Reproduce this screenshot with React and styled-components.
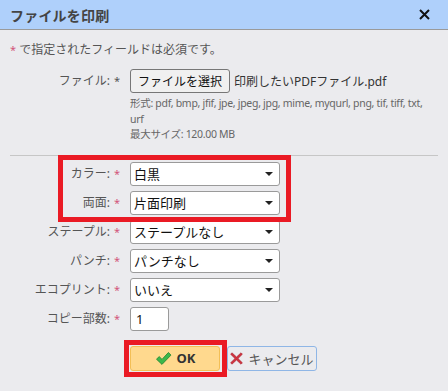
import React from 'react';
import styled, { createGlobalStyle } from 'styled-components';

const Global = createGlobalStyle`
  html, body {
    margin: 0;
    padding: 0;
    background: #ebebee;
  }
  body {
    font-family: "Noto Sans", "Noto Sans CJK JP", sans-serif;
    font-size: 12px;
    color: #333;
  }
`;

const Dialog = styled.div`
  width: 448px;
  height: 391px;
  background: #ebebee;
  overflow: hidden;
`;

const TitleBar = styled.div`
  height: 29px;
  background: #afd0fb;
  border-bottom: 1px solid #9a9a9a;
  display: flex;
  align-items: center;
  justify-content: space-between;
  padding: 0 18px 0 10px;
`;

const Title = styled.div`
  font-size: 14px;
  font-weight: bold;
  color: #444;
  letter-spacing: 0.2px;
`;

const Body = styled.div`
  padding: 0 10px;
`;

const Note = styled.div`
  margin-top: 12px;
  line-height: 16px;
  color: #555;
`;

const Req = styled.span`
  color: ${p => (p.$plain ? '#555' : '#d2567a')};
  margin-left: ${p => (p.$gap ? '4px' : '0')};
  font-size: 11px;
`;

const Row = styled.div`
  display: grid;
  grid-template-columns: 110px 1fr;
  column-gap: 10px;
  align-items: ${p => (p.$top ? 'start' : 'center')};
  min-height: 24px;
`;

const Label = styled.div`
  text-align: right;
  color: #555;
  line-height: 24px;
  white-space: nowrap;
`;

const FileBlock = styled.div`
  margin-top: 11px;
`;

const FileLine = styled.div`
  display: flex;
  align-items: center;
  gap: 4px;
`;

const FileButton = styled.button`
  height: 24px;
  width: 100px;
  padding: 0;
  border: 1px solid #777;
  border-radius: 3px;
  background: #f0f0f0;
  font-family: inherit;
  font-size: 12px;
  color: #111;
`;

const FileName = styled.span`
  color: #333;
`;

const Hint = styled.div`
  margin-top: 3px;
  font-size: 10.5px;
  letter-spacing: -0.3px;
  line-height: 15.5px;
  color: #666;
  white-space: nowrap;
`;

const Divider = styled.div`
  height: 1px;
  background: #c6c6c6;
  margin-top: 12px;
`;

const Rows = styled.div`
  display: flex;
  flex-direction: column;
  gap: 5px;
  margin-top: 6px;
`;

const Highlight = styled.div`
  position: relative;
  display: flex;
  flex-direction: column;
  gap: 5px;
  &::after {
    content: '';
    position: absolute;
    left: 48px;
    top: -7px;
    width: 223px;
    height: 57px;
    border: 5px solid #ea1a24;
    pointer-events: none;
  }
`;

const Select = styled.div`
  width: 150px;
  height: 24px;
  box-sizing: border-box;
  background: #fff;
  border: 1px solid #9a9a9a;
  border-radius: 3px;
  display: flex;
  align-items: center;
  justify-content: space-between;
  padding: 0 6px 0 3px;
  font-size: 13px;
  color: #111;
`;

const Arrow = styled.span`
  width: 0;
  height: 0;
  border-left: 4px solid transparent;
  border-right: 4px solid transparent;
  border-top: 4px solid #222;
`;

const NumberBox = styled.div`
  width: 39px;
  height: 24px;
  box-sizing: border-box;
  background: #fff;
  border: 1px solid #9a9a9a;
  border-radius: 3px;
  padding: 0 5px;
  line-height: 22px;
  font-size: 13px;
  color: #111;
`;

const Actions = styled.div`
  display: flex;
  gap: 7px;
  margin-top: 15px;
  padding-left: 120px;
`;

const Button = styled.button`
  position: relative;
  height: 25px;
  width: ${p => p.$w}px;
  box-sizing: border-box;
  display: flex;
  align-items: center;
  justify-content: center;
  gap: 5px;
  border-radius: 3px;
  font-family: inherit;
  font-size: 13px;
  padding: 0;
  background: ${p => (p.$primary ? '#ffd98e' : '#ebebee')};
  border: 1px solid ${p => (p.$primary ? '#f3bf55' : '#8fb6e6')};
  color: ${p => (p.$primary ? '#333' : '#555')};
  font-weight: ${p => (p.$primary ? 'bold' : 'normal')};
  &::after {
    content: '';
    display: ${p => (p.$marked ? 'block' : 'none')};
    position: absolute;
    left: -7px;
    top: -7px;
    right: -8px;
    bottom: -7px;
    border: 5px solid #ea1a24;
    pointer-events: none;
  }
`;

const CheckIcon = () => (
  <svg width="17" height="15" viewBox="0 0 17 15">
    <path d="M1.5 8.2 L4.2 5.6 L7 8.4 L13.4 1.5 L16 4.1 L7 13.4 Z" fill="#3cb84a" stroke="#2a8a35" strokeWidth="0.9" strokeLinejoin="round" />
  </svg>
);

const CrossIcon = () => (
  <svg width="13" height="13" viewBox="0 0 13 13">
    <path d="M2 0.8 L6.5 5 L11 0.8 L12.4 2.2 L8 6.5 L12.4 10.8 L11 12.2 L6.5 8 L2 12.2 L0.6 10.8 L5 6.5 L0.6 2.2 Z" fill="#d0333f" stroke="#a82430" strokeWidth="0.6" strokeLinejoin="round" />
  </svg>
);

const CloseIcon = () => (
  <svg width="11" height="11" viewBox="0 0 11 11">
    <path d="M1 1 L10 10 M10 1 L1 10" stroke="#111" strokeWidth="2" />
  </svg>
);

const SelectRow = ({ label, value }) => (
  <Row>
    <Label>{label}:<Req $gap>*</Req></Label>
    <Select>{value}<Arrow /></Select>
  </Row>
);

export default function App() {
  return (
    <Dialog>
      <Global />
      <TitleBar>
        <Title>ファイルを印刷</Title>
        <CloseIcon />
      </TitleBar>
      <Body>
        <Note><Req>*</Req> で指定されたフィールドは必須です。</Note>
        <FileBlock>
          <Row $top>
            <Label>ファイル:<Req $gap $plain>*</Req></Label>
            <div>
              <FileLine>
                <FileButton>ファイルを選択</FileButton>
                <FileName>印刷したいPDFファイル.pdf</FileName>
              </FileLine>
              <Hint>
                形式: pdf, bmp, jfif, jpe, jpeg, jpg, mime, myqurl, png, tif, tiff, txt,
                <br />
                urf
                <br />
                最大サイズ: 120.00 MB
              </Hint>
            </div>
          </Row>
        </FileBlock>
        <Divider />
        <Rows>
          <Highlight>
            <SelectRow label="カラー" value="白黒" />
            <SelectRow label="両面" value="片面印刷" />
          </Highlight>
          <SelectRow label="ステープル" value="ステープルなし" />
          <SelectRow label="パンチ" value="パンチなし" />
          <SelectRow label="エコプリント" value="いいえ" />
          <Row>
            <Label>コピー部数:<Req $gap>*</Req></Label>
            <NumberBox>1</NumberBox>
          </Row>
        </Rows>
        <Actions>
          <Button $primary $marked $w={90}><CheckIcon />OK</Button>
          <Button $w={90}><CrossIcon />キャンセル</Button>
        </Actions>
      </Body>
    </Dialog>
  );
}
